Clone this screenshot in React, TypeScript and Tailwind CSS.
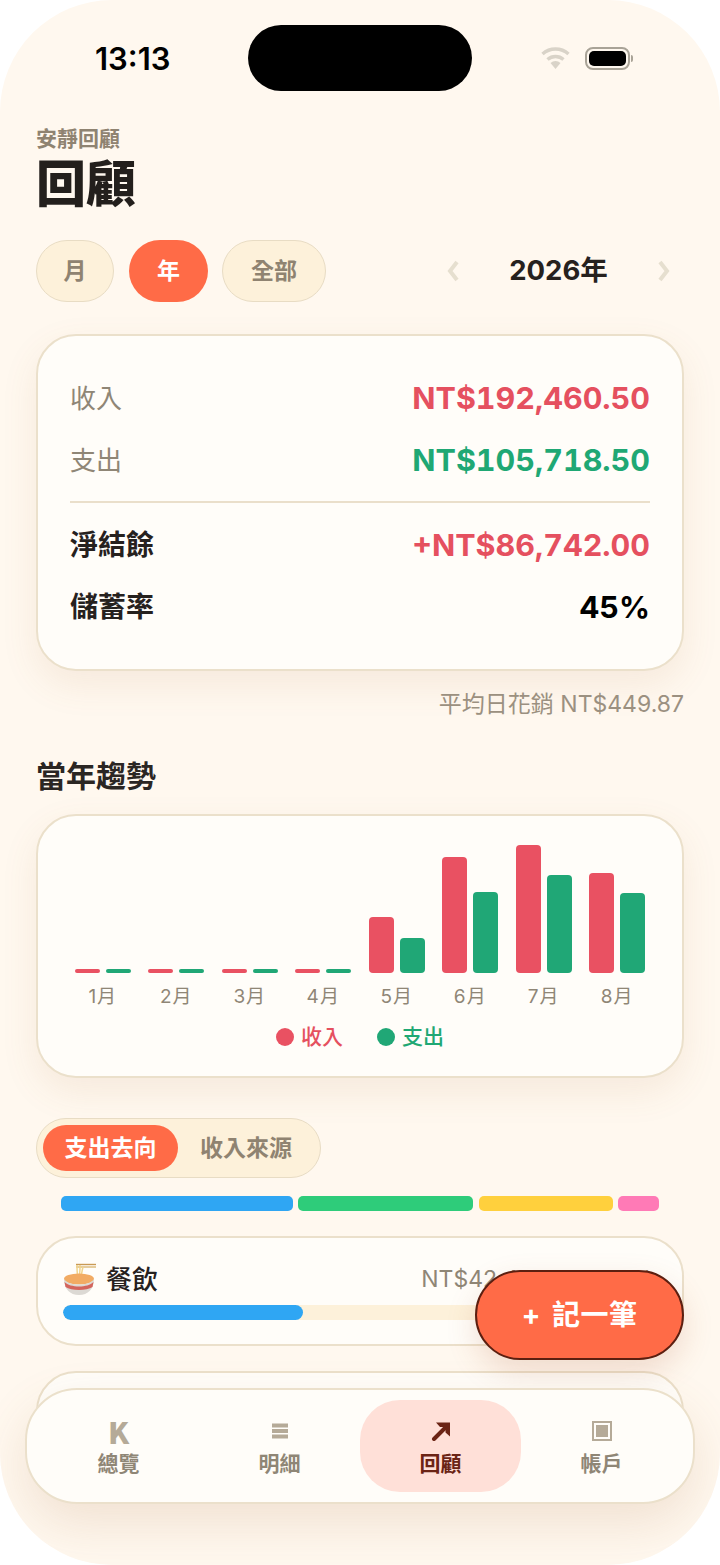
const chart = [
  { label: "1月", income: 4, expense: 4 },
  { label: "2月", income: 4, expense: 4 },
  { label: "3月", income: 4, expense: 4 },
  { label: "4月", income: 4, expense: 4 },
  { label: "5月", income: 56, expense: 35 },
  { label: "6月", income: 116, expense: 81 },
  { label: "7月", income: 128, expense: 98 },
  { label: "8月", income: 100, expense: 80 },
];

function SummaryRow({ label, value, strong, color }: { label: string; value: string; strong?: boolean; color: string }) {
  return (
    <div className="flex h-[62px] items-center justify-between">
      <span className={strong ? "text-[28px] font-bold text-[#26211e]" : "text-[26px] font-normal text-[#8f8676]"}>{label}</span>
      <span className={`text-[30.500px] font-bold tabular-nums ${color}`}>{value}</span>
    </div>
  );
}

function NoodleBowl() {
  return (
    <svg width="34" height="34" viewBox="0 0 34 34" className="shrink-0">
      <path d="M13 2.500h20" stroke="#c99a55" strokeWidth="1.400" />
      <path d="M13 5h20" stroke="#dcb878" strokeWidth="1.400" />
      <path d="M14 3c0 5 0 9 1 14M17 3c0 5 0 9-1 14M20 5c-1 4-2 8-2 12" stroke="#f1d48c" strokeWidth="1.500" fill="none" />
      <ellipse cx="16" cy="17" rx="15" ry="5.500" fill="#f2ab63" />
      <path d="M1 17c0 10 6 16 15 16s15-6 15-16c-3 4-8 5.500-15 5.500S4 21 1 17z" fill="#dcd9d4" />
      <path d="M1.500 20c3 3 8.500 4.500 14.500 4.500S27.500 23 30.500 20l-1 5c-3 2-8 3-13.500 3s-10.500-1-13.500-3z" fill="#d4645c" />
    </svg>
  );
}

function TabItem({ label, active, icon }: { label: string; active?: boolean; icon: React.ReactNode }) {
  return (
    <div className={`flex h-[92px] flex-1 flex-col items-center justify-center rounded-[40px] pt-[2px] ${active ? "bg-[#ffe0d8] text-[#6b2415]" : "text-[#8f8676]"}`}>
      <div className="flex h-[30px] items-center justify-center">{icon}</div>
      <span className="mt-[3px] text-[21px] leading-[30px] font-bold">{label}</span>
    </div>
  );
}

export default function App() {
  return (
    <div className="relative h-[1565px] w-[720px] overflow-hidden rounded-[112px] bg-[#fff8ef] font-['Inter','Noto_Sans_CJK_TC',sans-serif]">
      {/* status bar */}
      <div className="relative flex h-[116px] items-start justify-between">
        <span className="ml-[95px] mt-[39px] text-[31px] leading-[40px] font-semibold text-black">13:13</span>
        <div className="absolute left-[248px] top-[25px] h-[66px] w-[224px] rounded-[33px] bg-black" />
        <div className="mr-[87px] mt-[46px] flex items-center gap-[14px]">
          <svg width="31" height="24" viewBox="0 0 31 24">
            <path d="M15.500 23l-5-6a7.500 7.500 0 0 1 10 0z" fill="#d9d3c8" />
            <path d="M7.500 13.500a12 12 0 0 1 16 0" stroke="#d9d3c8" strokeWidth="3.400" fill="none" />
            <path d="M2.500 8a19.500 19.500 0 0 1 26 0" stroke="#d9d3c8" strokeWidth="3.400" fill="none" />
          </svg>
          <div className="flex items-center gap-[1px]">
            <div className="flex h-[23px] w-[45px] items-center justify-center rounded-[8px] border-2 border-[#a9a397]">
              <div className="h-[15px] w-[37px] rounded-[5px] bg-black" />
            </div>
            <div className="h-[7px] w-[2px] rounded-r-[2px] bg-[#a9a397]" />
          </div>
        </div>
      </div>

      <div className="px-[36px]">
        <div className="mt-[9px] text-[21px] leading-[28px] font-bold text-[#8f8371]">安靜回顧</div>
        <h1 className="mt-[2px] text-[50px] leading-[58px] font-black text-[#231f1c]">回顧</h1>

        {/* range switch */}
        <div className="mt-[27px] flex h-[62px] items-center">
          <div className="flex h-full w-[78px] items-center justify-center rounded-full border-[1.5px] border-[#e8dcc4] bg-[#fdf1da] text-[23px] font-bold text-[#8f8371]">月</div>
          <div className="ml-[15px] flex h-full w-[79px] items-center justify-center rounded-full bg-[#ff6b47] text-[23px] font-bold text-white">年</div>
          <div className="ml-[14px] flex h-full w-[104px] items-center justify-center rounded-full border-[1.5px] border-[#e8dcc4] bg-[#fdf1da] text-[23px] font-bold text-[#8f8371]">全部</div>
          <div className="ml-auto flex items-center pr-[13px]">
            <svg width="15" height="22" viewBox="0 0 15 22" fill="none"><path d="M11 2L4 11l7 9" stroke="#e6dfcf" strokeWidth="4" /></svg>
            <span className="w-[195px] text-center text-[27.500px] font-bold text-[#26211e]">2026年</span>
            <svg width="15" height="22" viewBox="0 0 15 22" fill="none"><path d="M4 2l7 9-7 9" stroke="#e6dfcf" strokeWidth="4" /></svg>
          </div>
        </div>

        {/* summary */}
        <div className="mt-[32px] rounded-[40px] border-2 border-[#ebe0cb] bg-[#fffdf9] px-[32px] pt-[31px] pb-[31px] shadow-[0_14px_36px_rgba(170,110,60,0.1)]">
          <SummaryRow label="收入" value="NT$192,460.50" color="text-[#e5505f]" />
          <SummaryRow label="支出" value="NT$105,718.50" color="text-[#1fa874]" />
          <div className="mt-[10px] mb-[11px] h-[2px] bg-[#eadfcb]" />
          <SummaryRow label="淨結餘" value="+NT$86,742.00" strong color="text-[#e5505f]" />
          <SummaryRow label="儲蓄率" value="45%" strong color="text-black" />
        </div>
        <div className="mt-[17px] text-right text-[23px] leading-[32px] text-[#9b9080]">平均日花銷 NT$449.87</div>

        <h2 className="mt-[36px] text-[30px] leading-[40px] font-bold text-[#2b2623]">當年趨勢</h2>

        {/* monthly chart */}
        <div className="mt-[18px] h-[264px] rounded-[40px] border-2 border-[#ebe0cb] bg-[#fffdf9] pl-[28px] pr-[28px] shadow-[0_14px_36px_rgba(170,110,60,0.1)]">
          <div className="grid h-[157px] grid-cols-8">
            {chart.map((m) => (
              <div key={m.label} className="flex items-end justify-center gap-[6px]">
                <div className="w-[25px] rounded-[4px] bg-[#e95162]" style={{ height: m.income }} />
                <div className="w-[25px] rounded-[4px] bg-[#20a776]" style={{ height: m.expense }} />
              </div>
            ))}
          </div>
          <div className="mt-[10px] grid grid-cols-8">
            {chart.map((m) => (
              <div key={m.label} className="text-center text-[19px] leading-[28px] tracking-[1px] text-[#8f8676]">{m.label}</div>
            ))}
          </div>
          <div className="mt-[10px] flex items-center justify-center gap-[34px] text-[21px] leading-[32px] font-medium">
            <div className="flex items-center gap-[7px] text-[#e5505f]">
              <span className="h-[18px] w-[18px] rounded-full bg-[#e95162]" />收入
            </div>
            <div className="flex items-center gap-[7px] text-[#1fa874]">
              <span className="h-[18px] w-[18px] rounded-full bg-[#20a776]" />支出
            </div>
          </div>
        </div>

        {/* split switch */}
        <div className="mt-[40px] flex h-[60px] w-[285px] items-center rounded-full border-[1.5px] border-[#e8dcc4] bg-[#fdf1da] px-[6px]">
          <div className="flex h-[46px] w-[135px] items-center justify-center rounded-full bg-[#ff6b47] text-[23px] font-bold text-white">支出去向</div>
          <div className="flex-1 text-center text-[23px] font-bold text-[#8f8371]">收入來源</div>
        </div>

        <div className="mx-[25px] mt-[18px] flex h-[15px] gap-[5px]">
          <div className="w-[232px] rounded-[5px] bg-[#2fa6f3]" />
          <div className="w-[175px] rounded-[5px] bg-[#2ecc7a]" />
          <div className="ml-[1px] w-[134px] rounded-[5px] bg-[#ffd03d]" />
          <div className="w-[41px] rounded-[5px] bg-[#ff7ab6]" />
        </div>

        {/* categories */}
        <div className="mt-[25px] h-[110px] rounded-[40px] border-2 border-[#ebe0cb] bg-[#fffdf9] px-[25px] pt-[22px]">
          <div className="flex h-[38px] items-center justify-between">
            <div className="flex items-center gap-[9px] text-[26px] font-medium text-[#26211e]">
              <NoodleBowl />餐飲
            </div>
            <span className="mr-[4px] text-[23px] text-[#8f8676]">NT$42,460.50 · 40%</span>
          </div>
          <div className="mt-[7px] h-[15px] overflow-hidden rounded-[8px] bg-[#fdf1da]">
            <div className="h-full w-[240px] rounded-[8px] bg-[#2fa6f3]" />
          </div>
        </div>
        <div className="mt-[25px] h-[110px] rounded-[40px] border-2 border-[#ebe0cb] bg-[#fffdf9]" />
      </div>

      {/* floating add button */}
      <div className="absolute left-[475px] top-[1270px] flex h-[90px] w-[209px] items-center justify-center rounded-[45px] border-2 border-[#5c1f10] bg-[#ff6b47] text-[28px] font-bold tracking-[0.5px] [word-spacing:4px] text-white shadow-[0_12px_30px_rgba(170,90,50,0.18)]">
        + 記一筆
      </div>

      {/* tab bar */}
      <div className="absolute left-[25px] top-[1388px] flex h-[116px] w-[670px] items-center rounded-[52px] border-2 border-[#ebe0cb] bg-[#fffdf9] px-[11px] shadow-[0_20px_50px_rgba(170,110,60,0.16)]">
        <TabItem label="總覽" icon={<span className="font-['Noto_Sans_CJK_TC',sans-serif] text-[30px] font-black leading-none text-[#b5aa98]">K</span>} />
        <TabItem
          label="明細"
          icon={
            <svg width="16" height="16" viewBox="0 0 16 16" fill="#b5aa98">
              <rect y="0.500" width="16" height="4" />
              <rect y="6" width="16" height="4" />
              <rect y="11.500" width="16" height="4" />
            </svg>
          }
        />
        <TabItem
          active
          label="回顧"
          icon={
            <svg width="20" height="20" viewBox="0 0 20 20" fill="none">
              <path d="M3 18L16 5" stroke="#6b2415" strokeWidth="4" strokeLinecap="round" />
              <path d="M5 1.500h14v14l-4.500-4V6H9z" fill="#6b2415" />
            </svg>
          }
        />
        <TabItem
          label="帳戶"
          icon={
            <div className="flex h-[20px] w-[20px] items-center justify-center border-2 border-[#b5aa98]">
              <div className="h-[12px] w-[12px] bg-[#b5aa98]" />
            </div>
          }
        />
      </div>
    </div>
  );
}
